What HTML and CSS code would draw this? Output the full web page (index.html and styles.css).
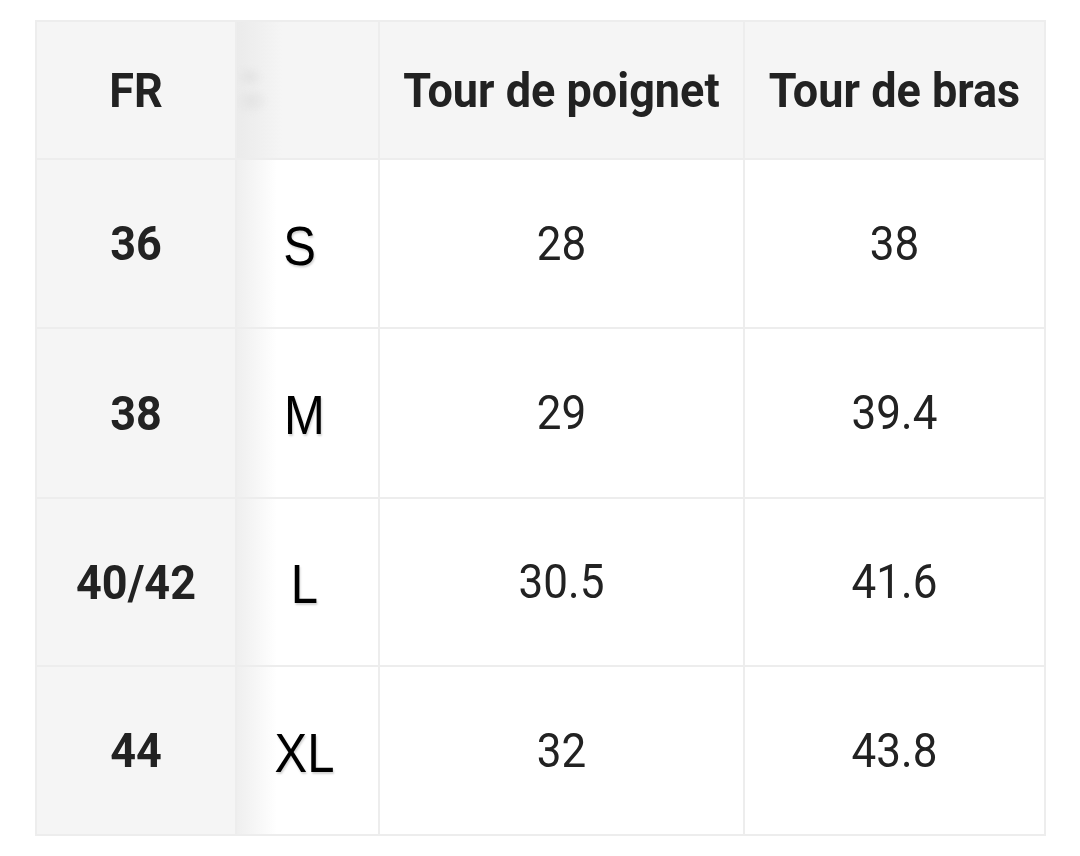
FILE: index.html
```html
<!DOCTYPE html>
<html lang="fr">
<head>
<meta charset="utf-8">
<title>Guide des tailles</title>
<link rel="stylesheet" href="styles.css">
</head>
<body>
<table class="sizes">
  <colgroup>
    <col class="c-fr">
    <col class="c-size">
    <col class="c-wrist">
    <col class="c-arm">
  </colgroup>
  <thead>
    <tr class="head">
      <th class="fr"><span class="t">FR</span></th>
      <th class="size size-head"><span class="smudge" aria-hidden="true"></span></th>
      <th><span class="t">Tour de poignet</span></th>
      <th><span class="t">Tour de bras</span></th>
    </tr>
  </thead>
  <tbody>
    <tr>
      <td class="fr"><span class="t">36</span></td>
      <td class="size"><span class="letter letter-s">S</span></td>
      <td><span class="t">28</span></td>
      <td><span class="t">38</span></td>
    </tr>
    <tr>
      <td class="fr"><span class="t">38</span></td>
      <td class="size"><span class="letter">M</span></td>
      <td><span class="t">29</span></td>
      <td><span class="t">39.4</span></td>
    </tr>
    <tr>
      <td class="fr"><span class="t">40/42</span></td>
      <td class="size"><span class="letter">L</span></td>
      <td><span class="t">30.5</span></td>
      <td><span class="t">41.6</span></td>
    </tr>
    <tr>
      <td class="fr"><span class="t">44</span></td>
      <td class="size"><span class="letter">XL</span></td>
      <td><span class="t">32</span></td>
      <td><span class="t">43.8</span></td>
    </tr>
  </tbody>
</table>
</body>
</html>
```

FILE: styles.css
```css
html, body {
  margin: 0;
  padding: 0;
  background: #ffffff;
}

body {
  font-family: Roboto, "Liberation Sans", sans-serif;
  color: #222222;
}

.sizes {
  margin: 20px 0 0 35px;
  border-collapse: collapse;
  table-layout: fixed;
  width: 1009px;
}

.c-fr { width: 200px; }
.c-size { width: 143px; }
.c-wrist { width: 365px; }
.c-arm { width: 301px; }

.sizes th,
.sizes td {
  border: 2px solid #ededed;
  text-align: center;
  vertical-align: middle;
  padding: 0;
}

.head th {
  height: 136px;
  background: #f5f5f5;
  font-weight: 700;
  font-size: 45px;
}

.sizes tbody tr:nth-child(1) td { height: 167px; }
.sizes tbody tr:nth-child(2) td { height: 168px; }
.sizes tbody tr:nth-child(3) td { height: 166px; }
.sizes tbody tr:nth-child(4) td { height: 167px; }

.sizes td {
  font-size: 44px;
  font-weight: 400;
}

.sizes .fr {
  background: #f5f5f5;
}

.sizes td.fr {
  font-weight: 700;
  font-size: 45px;
}

.t {
  display: inline-block;
  transform: scaleY(1.08);
}

.sizes .size {
  background: linear-gradient(to right, #efefef 0px, #f6f6f6 18px, #ffffff 40px);
}

.sizes .size-head {
  background: linear-gradient(to right, #ebebeb 0px, #f0f0f0 25px, #f5f5f5 45px);
  text-align: left;
  overflow: hidden;
}

.smudge {
  display: block;
  width: 34px;
  height: 58px;
  margin-left: -2px;
  background:
    radial-gradient(ellipse 14px 11px at 14px 16px, #e3e3e3 0%, rgba(227, 227, 227, 0) 100%),
    radial-gradient(ellipse 17px 13px at 16px 40px, #e3e3e3 0%, rgba(227, 227, 227, 0) 100%);
  filter: blur(2px);
}

.letter {
  display: inline-block;
  font-family: "Liberation Sans", Arial, sans-serif;
  font-size: 49px;
  color: #000000;
  transform: translate(-3px, 2px) scaleY(1.12);
  text-shadow: 1px 2px 2px rgba(0, 0, 0, 0.18);
}

.letter-s {
  transform: translate(-8px, 2px) scaleY(1.12);
}
```
